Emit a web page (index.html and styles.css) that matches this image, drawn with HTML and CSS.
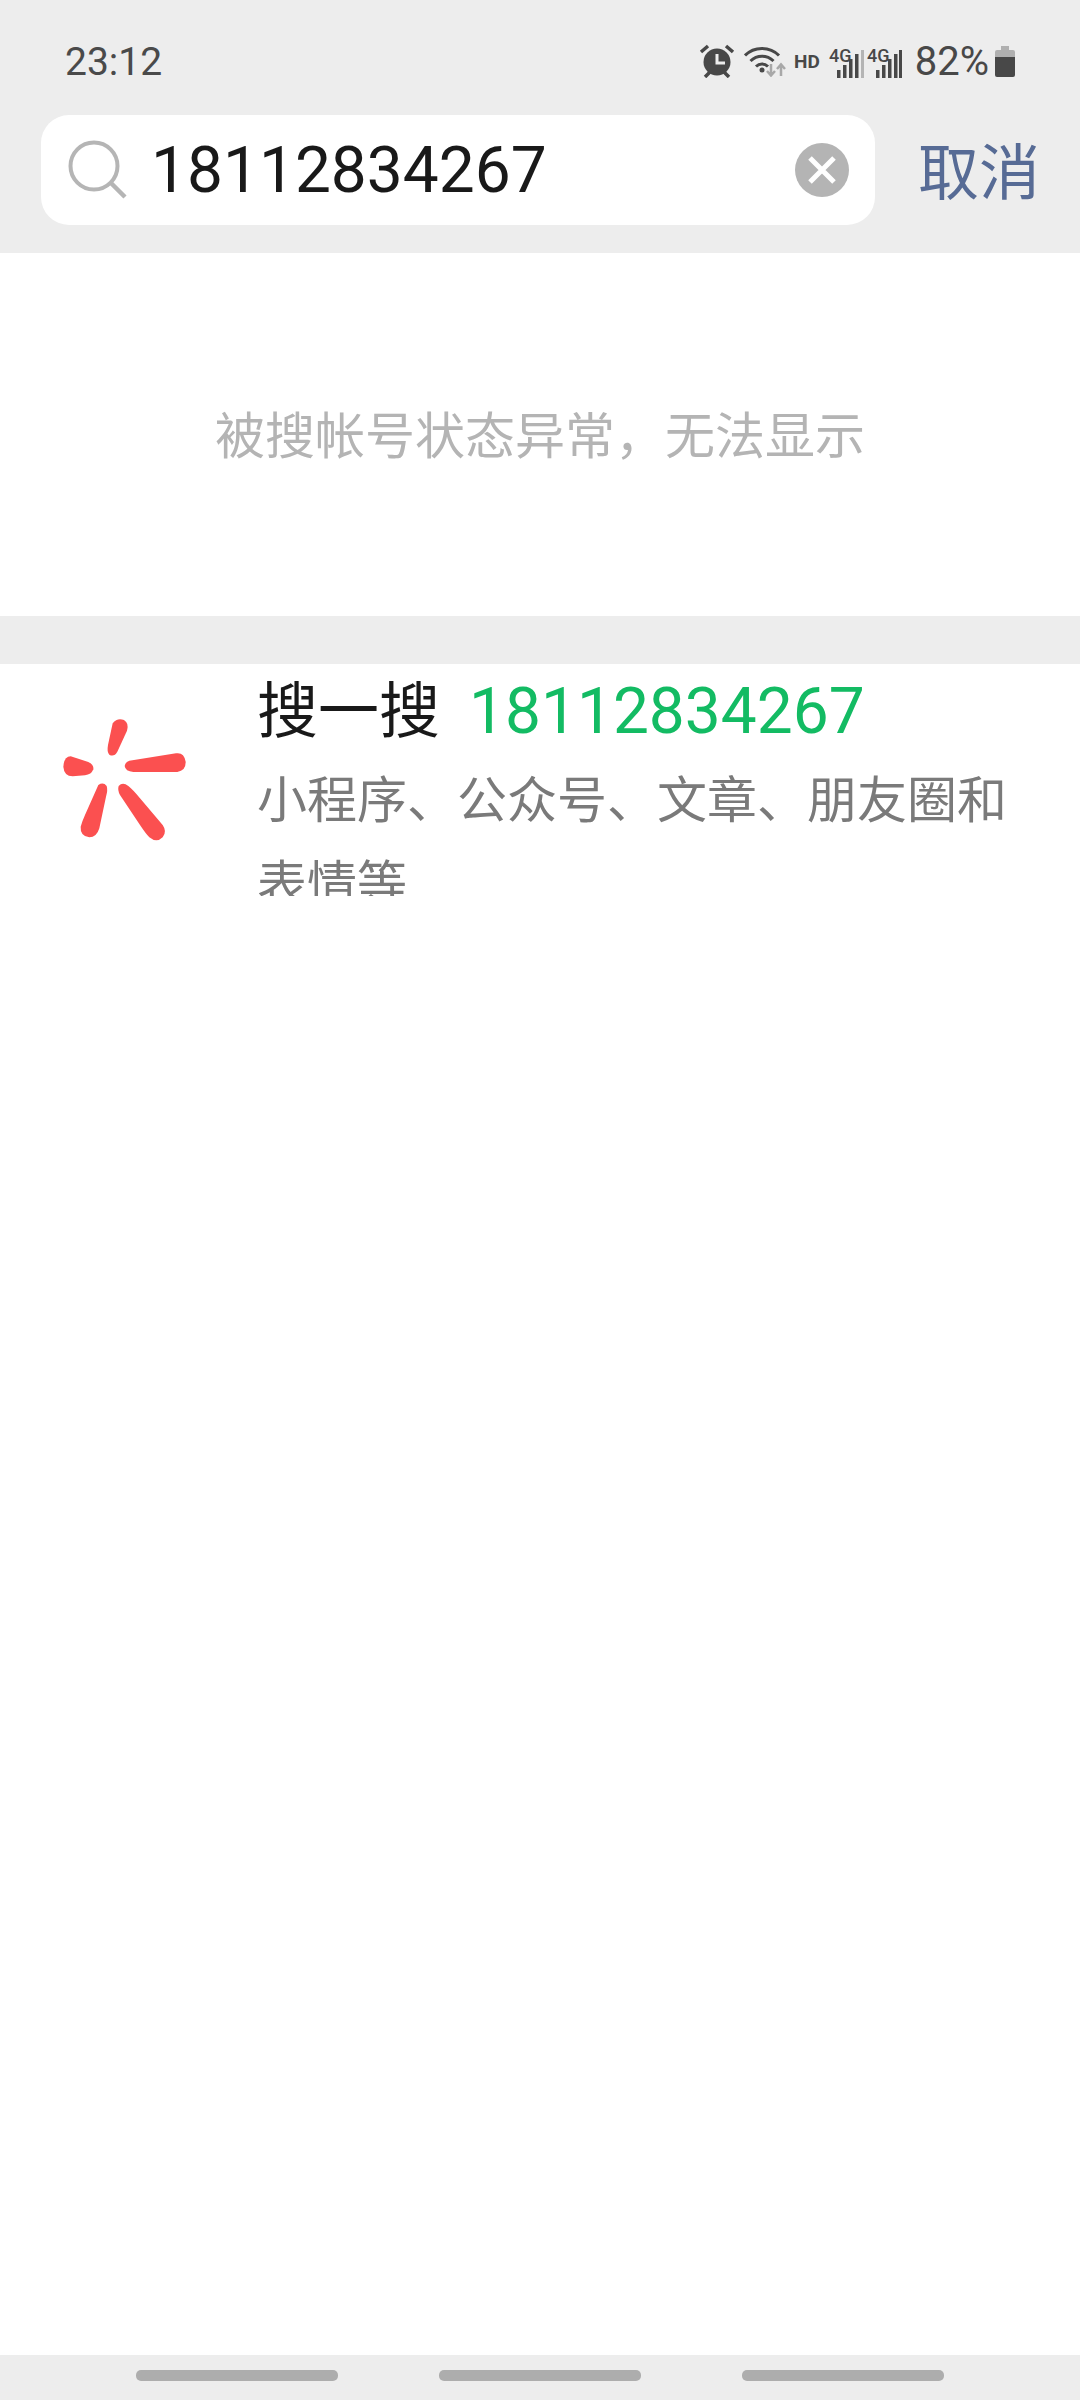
FILE: index.html
```html
<!DOCTYPE html>
<html lang="zh-CN">
<head>
    <meta charset="UTF-8">
    <meta name="viewport" content="width=device-width, initial-scale=1.0">
    <title>搜索</title>
    <link rel="stylesheet" href="styles.css">
</head>
<body>

    <div class="top">
        <!-- Barra de estado -->
        <div class="status">
            <span class="time">23:12</span>
            <div class="status-icons">
                <svg class="ic-alarm" width="36" height="34" viewBox="0 0 36 34">
                    <circle cx="18" cy="18" r="13.500" fill="#484848"/>
                    <path d="M18 10v9h8" fill="none" stroke="#ededed" stroke-width="3"/>
                    <path d="M2 8l7-6M34 8l-7-6M6 33l5-5M30 33l-5-5" fill="none" stroke="#484848" stroke-width="3.500"/>
                </svg>
                <svg class="ic-wifi" width="42" height="32" viewBox="0 0 42 32">
                    <path d="M1 10.500C10 1 26 1 35 10.500M6.500 16C13 9.500 23 9.500 29.500 16M12 21.500C15.500 18 20.500 18 24 21.500" fill="none" stroke="#484848" stroke-width="3"/>
                    <circle cx="18" cy="25" r="2.500" fill="#484848"/>
                    <path d="M27 19v11M23 26l4 4.500 4-4.500" fill="none" stroke="#a8a8a8" stroke-width="2.500"/>
                    <path d="M37 31v-11M33 24l4-4.500 4 4.500" fill="none" stroke="#a8a8a8" stroke-width="2.500"/>
                </svg>
                <span class="hd">HD</span>
                <svg class="ic-signal" width="35" height="33" viewBox="0 0 35 33">
                    <text class="sig-text" x="0" y="17">4G</text>
                    <rect x="8" y="25" width="3.500" height="8" fill="#484848"/>
                    <rect x="14" y="20" width="3.500" height="13" fill="#484848"/>
                    <rect x="20" y="14" width="3.500" height="19" fill="#484848"/>
                    <rect x="26" y="9" width="3.500" height="24" fill="#484848"/>
                    <rect x="32" y="5" width="3" height="28" fill="#b4b4b4"/>
                </svg>
                <svg class="ic-signal" width="35" height="33" viewBox="0 0 35 33">
                    <text class="sig-text" x="0" y="17">4G</text>
                    <rect x="9" y="25" width="3.500" height="8" fill="#484848"/>
                    <rect x="15" y="20" width="3.500" height="13" fill="#484848"/>
                    <rect x="21" y="14" width="3.500" height="19" fill="#484848"/>
                    <rect x="27" y="9" width="3.500" height="24" fill="#484848"/>
                    <rect x="32" y="5" width="3" height="28" fill="#484848"/>
                </svg>
                <span class="battery-text">82%</span>
                <svg class="ic-battery" width="20" height="31" viewBox="0 0 20 31">
                    <path d="M6 0h8v4h4q2 0 2 2v5H0V6q0-2 2-2h4z" fill="#b0b0b0"/>
                    <path d="M0 11h20v18q0 2-2 2H2q-2 0-2-2z" fill="#484848"/>
                </svg>
            </div>
        </div>

        <!-- Buscador -->
        <div class="search-row">
            <div class="search-box">
                <svg class="ic-search" width="60" height="60" viewBox="0 0 60 60">
                    <circle cx="26" cy="26" r="23.500" fill="none" stroke="#b5b5b5" stroke-width="4"/>
                    <path d="M43 43l14 14" fill="none" stroke="#b5b5b5" stroke-width="4.500"/>
                </svg>
                <span class="search-text">18112834267</span>
                <svg class="ic-clear" width="54" height="54" viewBox="0 0 54 54">
                    <circle cx="27" cy="27" r="27" fill="#b4b4b4"/>
                    <path d="M15 15l24 24M39 15l-24 24" fill="none" stroke="#fff" stroke-width="5"/>
                </svg>
            </div>
            <span class="cancel">取消</span>
        </div>
    </div>

    <div class="main">
        <div class="notice">被搜帐号状态异常&#65292;无法显示</div>
        <div class="band"></div>

        <div class="result">
            <div class="result-logo">
                <svg width="160" height="150" viewBox="0 0 480 450">
                    <g fill="#fb5050">
                        <path d="M218 70Q232 52 252 60Q268 70 261 92L232 155Q222 172 208 164Q200 156 204 135Z"/>
                        <path d="M268 182L408 160Q432 156 437 185Q438 212 412 216L280 216Q256 214 254 198Q256 186 268 182Z"/>
                        <path d="M92 169L145 186Q162 194 160 208Q154 224 135 226L98 229Q72 228 70 200Q72 170 92 169Z"/>
                        <path d="M175 255Q190 245 200 258Q204 270 198 290L178 385Q170 412 148 412Q120 408 122 380Q126 365 135 345Z"/>
                        <path d="M236 258Q248 245 265 258Q280 270 300 295L368 375Q382 395 368 412Q350 430 328 412Q318 402 300 375L240 285Q232 270 236 258Z"/>
                    </g>
                </svg>
            </div>
            <div class="result-body">
                <div class="result-title">搜一搜<span class="result-num">18112834267</span></div>
                <div class="result-sub">小程序、公众号、文章、朋友圈和表情等</div>
            </div>
        </div>
    </div>

    <!-- Barra de navegacion -->
    <div class="nav">
        <span class="nav-pill"></span>
        <span class="nav-pill"></span>
        <span class="nav-pill"></span>
    </div>

</body>
</html>
```

FILE: styles.css
```css
/* Estilos generales */
body {
    font-family: Roboto, "Noto Sans CJK SC", sans-serif;
    background-color: #fff;
    margin: 0;
    width: 1080px;
    height: 2400px;
    display: flex;
    flex-direction: column;
    overflow: hidden;
}

.top {
    background-color: #ededed;
    height: 253px;
}

.status {
    height: 115px;
    padding: 0 65px 0 65px;
    display: flex;
    justify-content: space-between;
    align-items: center;
    box-sizing: border-box;
}

.time {
    font-size: 39px;
    color: #4a4a4a;
    padding-top: 8px;
}

.status-icons {
    display: flex;
    align-items: center;
    color: #484848;
    padding-top: 7px;
}

.ic-alarm {
    margin-right: 9px;
}

.ic-wifi {
    margin-right: 8px;
}

.hd {
    font-size: 19px;
    font-weight: 700;
    margin-right: 9px;
}

.ic-signal {
    margin-right: 3px;
    overflow: visible;
}

.sig-text {
    font-family: Roboto, sans-serif;
    font-size: 18px;
    font-weight: 500;
    fill: #484848;
}

.battery-text {
    font-size: 40px;
    margin: 0 6px 0 10px;
}

.search-row {
    display: flex;
    align-items: center;
    padding-left: 41px;
}

.search-box {
    width: 834px;
    height: 110px;
    background-color: #fff;
    border-radius: 28px;
    display: flex;
    align-items: center;
    padding: 0 26px 0 27px;
    box-sizing: border-box;
}

.ic-search {
    margin-right: 23px;
    flex-shrink: 0;
}

.search-text {
    flex: 1;
    font-size: 64px;
    color: #191919;
}

.cancel {
    font-size: 61px;
    color: #576b95;
    margin-left: 43px;
    padding-bottom: 3px;
}

.main {
    flex: 1;
}

.notice {
    height: 363px;
    padding-bottom: 6px;
    display: flex;
    align-items: center;
    justify-content: center;
    font-size: 50px;
    color: #b4b4b4;
    box-sizing: border-box;
}

.band {
    height: 48px;
    background-color: #ededed;
}

.result {
    display: flex;
    height: 232px;
    overflow: hidden;
}

.result-logo {
    width: 257px;
    padding: 36px 0 0 40px;
    box-sizing: border-box;
    flex-shrink: 0;
}

.result-body {
    width: 770px;
    padding-top: 2px;
}

.result-title {
    font-size: 61px;
    line-height: 92px;
    color: #191919;
}

.result-num {
    font-size: 64px;
    color: #13bb63;
    margin-left: 29px;
}

.result-sub {
    font-size: 50px;
    line-height: 84px;
    padding-top: 1px;
    color: #7a7a7a;
}

.nav {
    height: 45px;
    background-color: #ededed;
    display: flex;
    justify-content: center;
    align-items: center;
    gap: 101px;
    padding-bottom: 5px;
    box-sizing: border-box;
}

.nav-pill {
    width: 202px;
    height: 11px;
    background-color: #adadad;
    border-radius: 5px;
}
```
